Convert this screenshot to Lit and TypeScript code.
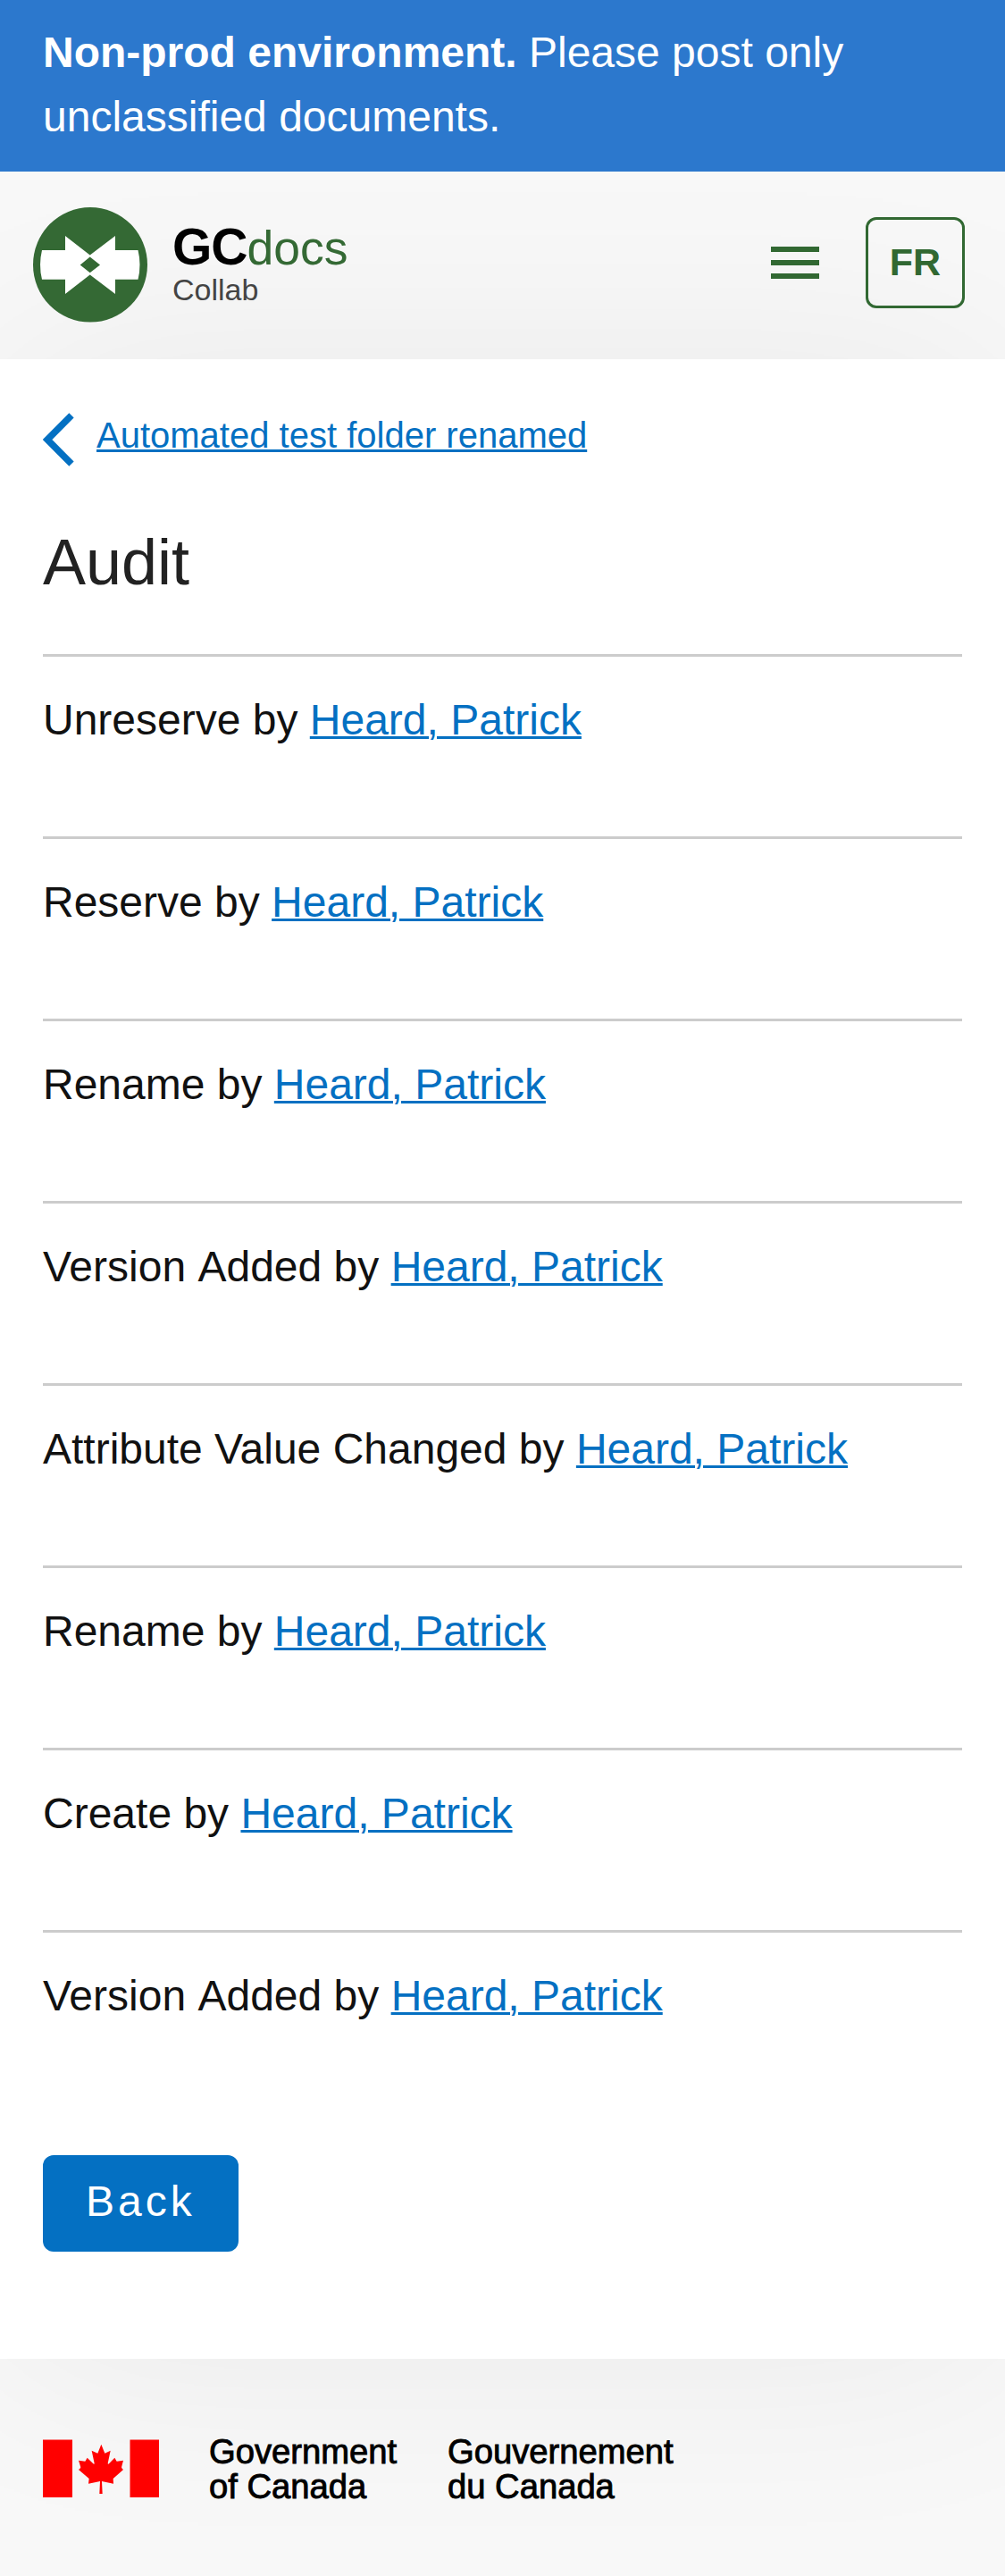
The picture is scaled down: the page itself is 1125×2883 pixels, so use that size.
import { LitElement, html, css } from "lit";
import { customElement } from "lit/decorators.js";

interface AuditEntry {
  action: string;
  user: string;
}

const entries: AuditEntry[] = [
  "Unreserve",
  "Reserve",
  "Rename",
  "Version Added",
  "Attribute Value Changed",
  "Rename",
  "Create",
  "Version Added",
].map((action) => ({ action, user: "Heard, Patrick" }));

@customElement("app-root")
export class AppRoot extends LitElement {
  static styles = css`
    :host {
      display: block;
      background: #f8f8f8;
      font-family: "Liberation Sans", Arial, sans-serif;
      font-size: 48px;
      color: #111;
    }
    * {
      box-sizing: border-box;
    }
    a {
      color: #0470c2;
      text-decoration-line: underline;
      text-decoration-thickness: 3px;
    }
    .page {
      display: flex;
      flex-direction: column;
      min-height: 2883px;
      overflow: hidden;
    }
    .banner {
      position: relative;
      z-index: 1;
      height: 192px;
      padding: 23px 48px 25px;
      background: #2c78cd;
      color: #fff;
      line-height: 72px;
    }
    .header {
      display: flex;
      align-items: flex-start;
      position: relative;
      z-index: 1;
      height: 210px;
      padding: 40px 45px 0 37px;
    }
    .mark {
      width: 128px;
      height: 129px;
    }
    .brand {
      margin: 16px 0 0 28px;
      flex: 1;
    }
    .name {
      display: flex;
      align-items: baseline;
      height: 56px;
      line-height: 56px;
      font-size: 53.5px;
      color: #346934;
    }
    .name b {
      font-size: 57px;
      letter-spacing: -1px;
      color: #000;
    }
    .sub {
      height: 40px;
      line-height: 40px;
      font-size: 34px;
      color: #444;
    }
    .menu {
      display: flex;
      flex-direction: column;
      gap: 9px;
      width: 54px;
      margin: 44px 52px 0 0;
    }
    .menu i {
      height: 6px;
      background: #316832;
    }
    .lang {
      display: flex;
      justify-content: center;
      width: 111px;
      height: 102px;
      margin-top: 11px;
      border: 3px solid #316832;
      border-radius: 12px;
      font-size: 43px;
      font-weight: bold;
      line-height: 95px;
      color: #316832;
    }
    .main {
      height: 2238px;
      padding: 48px 48px 0;
      background: #fff;
      box-shadow: 0 0 240px rgba(0, 0, 0, 0.06);
    }
    .crumb {
      display: flex;
      align-items: flex-start;
      gap: 25px;
      height: 96px;
      font-size: 40px;
      line-height: 60px;
    }
    .crumb svg {
      margin-top: 12px;
      width: 35px;
      height: 60px;
    }
    .crumb a {
      margin-top: 7px;
    }
    h1 {
      margin: 0;
      padding-top: 38px;
      height: 186px;
      font-size: 72px;
      font-weight: normal;
      line-height: 90px;
      color: #222;
    }
    .row {
      height: 204px;
      padding-top: 35px;
      border-top: 3px solid #ccc;
      line-height: 72px;
    }
    .word {
      display: inline-block;
    }
    .back {
      display: block;
      width: 219px;
      height: 108px;
      margin: 48px 0 0;
      padding: 0 0 5px 48px;
      border: 0;
      border-radius: 12px;
      background: #0470c2;
      color: #fff;
      font: inherit;
      line-height: 100px;
      letter-spacing: 4px;
      text-align: left;
    }
    .footer {
      display: flex;
      align-items: flex-start;
      position: relative;
      z-index: 1;
      height: 243px;
      padding: 90px 48px 0;
      font-size: 38.2px;
      line-height: 38.5px;
      color: #000;
      -webkit-text-stroke: 0.9px #000;
    }
    .flag {
      width: 130px;
      height: 66px;
    }
    .gov {
      width: 267px;
      margin: -5px 0 0 56px;
    }
    .gouv {
      margin-top: -5px;
    }
  `;

  // Each word is its own box, so no kerning is applied across the spaces.
  private words(text: string) {
    return text.split(" ").map((w) => html`<span class="word">${w}</span> `);
  }

  render() {
    return html`
      <div class="page">
        <div class="banner">
          <b>Non-prod environment.</b> Please post only<br />unclassified documents.
        </div>
        <header class="header">
          <svg class="mark" viewBox="0 0 128 129">
            <ellipse cx="64" cy="64.3" rx="64" ry="64.3" fill="#346934" />
            <path
              fill="#fff"
              d="M36 32 L63.7 53.5 L92 32 V48 H117.5 Q121.5 64.5 117.5 80.8 H92 V97 L63.7 75.5 L36 97 V80.8 H10 Q6 64.5 10 48 H36Z"
            />
            <path fill="#346934" d="M63.7 55.5 L75 64.5 L63.7 73.3 L52.7 64.5Z" />
          </svg>
          <div class="brand">
            <div class="name"><b>GC</b><span>docs</span></div>
            <div class="sub">Collab</div>
          </div>
          <div class="menu"><i></i><i></i><i></i></div>
          <div class="lang">FR</div>
        </header>
        <main class="main">
          <div class="crumb">
            <svg viewBox="0 0 35 60">
              <path d="M32 2.8 L5 30 L32 57.2" fill="none" stroke="#0470c2" stroke-width="7.5" />
            </svg>
            <a>Automated test folder renamed</a>
          </div>
          <h1>Audit</h1>
          ${entries.map((e) => html`<div class="row">${this.words(e.action)}by <a>${e.user}</a></div>`)}
          <button class="back">Back</button>
        </main>
        <footer class="footer">
          <svg class="flag" viewBox="0 0 130 66">
            <path fill="#f00" d="M0 .5h33v64.5H0zM97.5 .5h32.5v64.5H97.5z" />
            <path
              fill="#f00"
              transform="translate(-18 -30) scale(.33333)"
              d="M250 107 L262 137 L281 128 L272 171 Q273 175 276 172 L295 152 L302 164 L324 161 L318 184 Q318 188 324 192 L290 222 L291 239 L252 231 L254 273 H244 L246 231 L207 239 L209 222 L174 192 Q181 188 181 184 L174 161 L196 164 L203 152 L223 172 Q227 175 227 171 L218 128 L238 137Z"
            />
          </svg>
          <div class="gov">Government<br />of Canada</div>
          <div class="gouv">Gouvernement<br />du Canada</div>
        </footer>
      </div>
    `;
  }
}
